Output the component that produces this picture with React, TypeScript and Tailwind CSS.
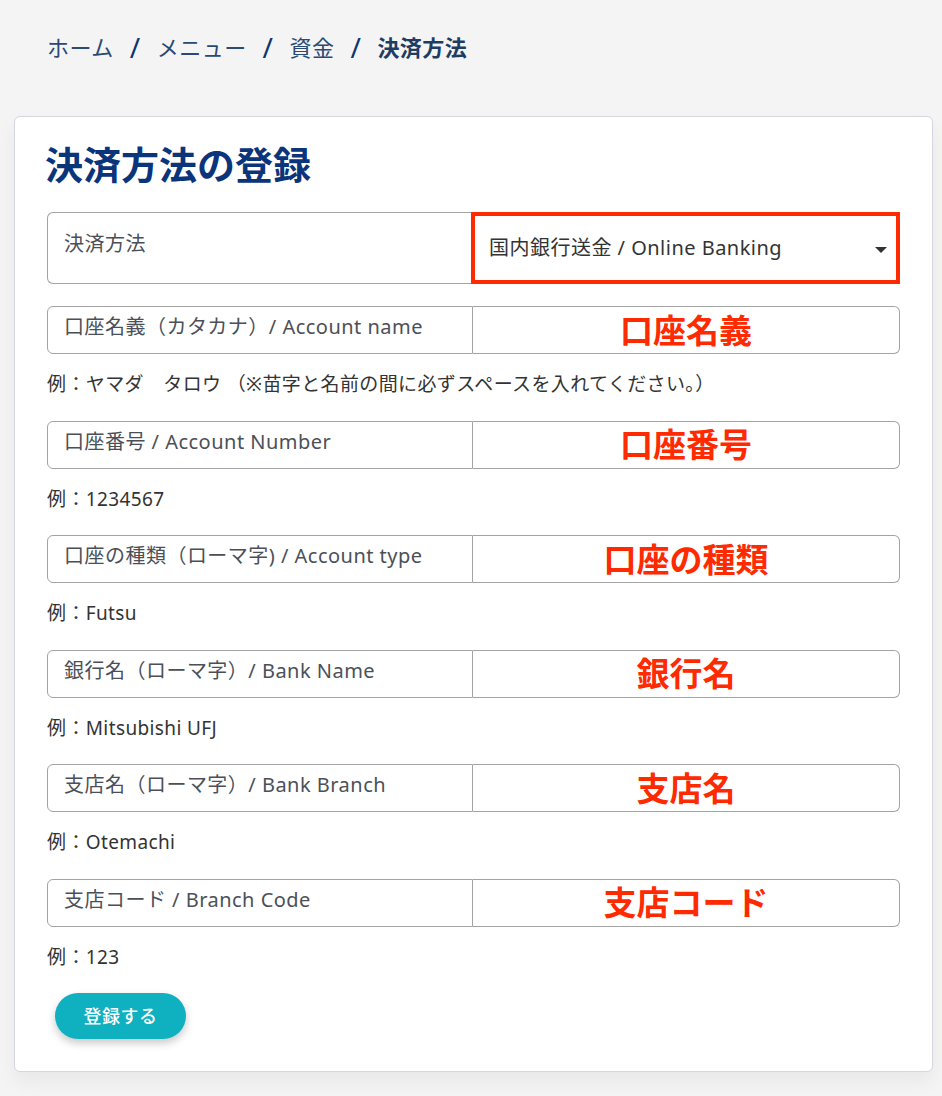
import React from 'react';

type Field = {
  label: string;
  value: string;
  hint: string;
};

const fields: Field[] = [
  {
    label: '口座名義（カタカナ）/ Account name',
    value: '口座名義',
    hint: '例：ヤマダ　タロウ （※苗字と名前の間に必ずスペースを入れてください。）',
  },
  { label: '口座番号 / Account Number', value: '口座番号', hint: '例：1234567' },
  { label: '口座の種類（ローマ字) / Account type', value: '口座の種類', hint: '例：Futsu' },
  { label: '銀行名（ローマ字）/ Bank Name', value: '銀行名', hint: '例：Mitsubishi UFJ' },
  { label: '支店名（ローマ字）/ Bank Branch', value: '支店名', hint: '例：Otemachi' },
  { label: '支店コード / Branch Code', value: '支店コード', hint: '例：123' },
];

const crumbs = ['ホーム', 'メニュー', '資金'];

export default function App() {
  return (
    <div
      className="min-h-screen bg-[#f4f4f5] pb-[25px] tracking-[0.03em]"
      style={{ fontFamily: '"Noto Sans", "Noto Sans CJK JP", sans-serif' }}
    >
      {/* Breadcrumb */}
      <nav className="flex items-center pl-[47px] pt-[31px] h-[62px] text-[22px] leading-none">
        {crumbs.map(c => (
          <React.Fragment key={c}>
            <span className="text-[#2b4a72]">{c}</span>
            <span className="mx-[16px] text-[28px] text-[#0e3470]">/</span>
          </React.Fragment>
        ))}
        <span className="font-bold text-[#1f3c63]">決済方法</span>
      </nav>

      {/* Card */}
      <div className="ml-[14px] mt-[54px] w-[919px] rounded-md border border-[#d5d7e0] bg-white px-[32px] pt-[24px] pb-[32px] shadow-[0_10px_18px_rgba(0,0,0,0.05)]">
        <h1 className="text-[38px] leading-[46px] font-bold tracking-normal text-[#0a357a] -ml-[2px]">決済方法の登録</h1>

        {/* Payment method row */}
        <div className="mt-[25px] flex h-[72px]">
          <div className="w-[424px] rounded-l-md border border-r-0 border-[#a3a3a3] pl-[16px] pt-[19px] text-[20px] leading-[24px] text-[#4b5058]">
            決済方法
          </div>
          <div className="relative flex flex-1 items-center border-[4px] border-[#ff2a00] pl-[14px] text-[20px] text-[#333]">
            国内銀行送金 / Online Banking
            <span className="absolute right-[9px] top-[31px] h-0 w-0 border-x-[6px] border-t-[6px] border-x-transparent border-t-[#333]" />
          </div>
        </div>

        {fields.map((f, i) => (
          <div key={i} className="mt-[22px]">
            <div className="flex h-[48px]">
              <div className="w-[426px] rounded-l-md border border-[#a3a3a3] pl-[16px] pt-[8px] text-[20px] leading-[24px] text-[#4b5058] whitespace-nowrap overflow-hidden">
                {f.label}
              </div>
              <div className="flex flex-1 items-center justify-center rounded-r-md border border-l-0 border-[#a3a3a3] text-[33px] font-bold leading-none tracking-normal text-[#ff2a00]">
                {f.value}
              </div>
            </div>
            <p className="mt-[17px] text-[19px] leading-[27.5px] tracking-[0.02em] text-[#333]">{f.hint}</p>
          </div>
        ))}

        <button className="ml-[8px] mt-[22px] h-[46px] w-[131px] rounded-full bg-[#0fb0bf] text-[18px] font-medium text-white shadow-[0_4px_8px_rgba(0,0,0,0.22)]">
          登録する
        </button>
      </div>
    </div>
  );
}
